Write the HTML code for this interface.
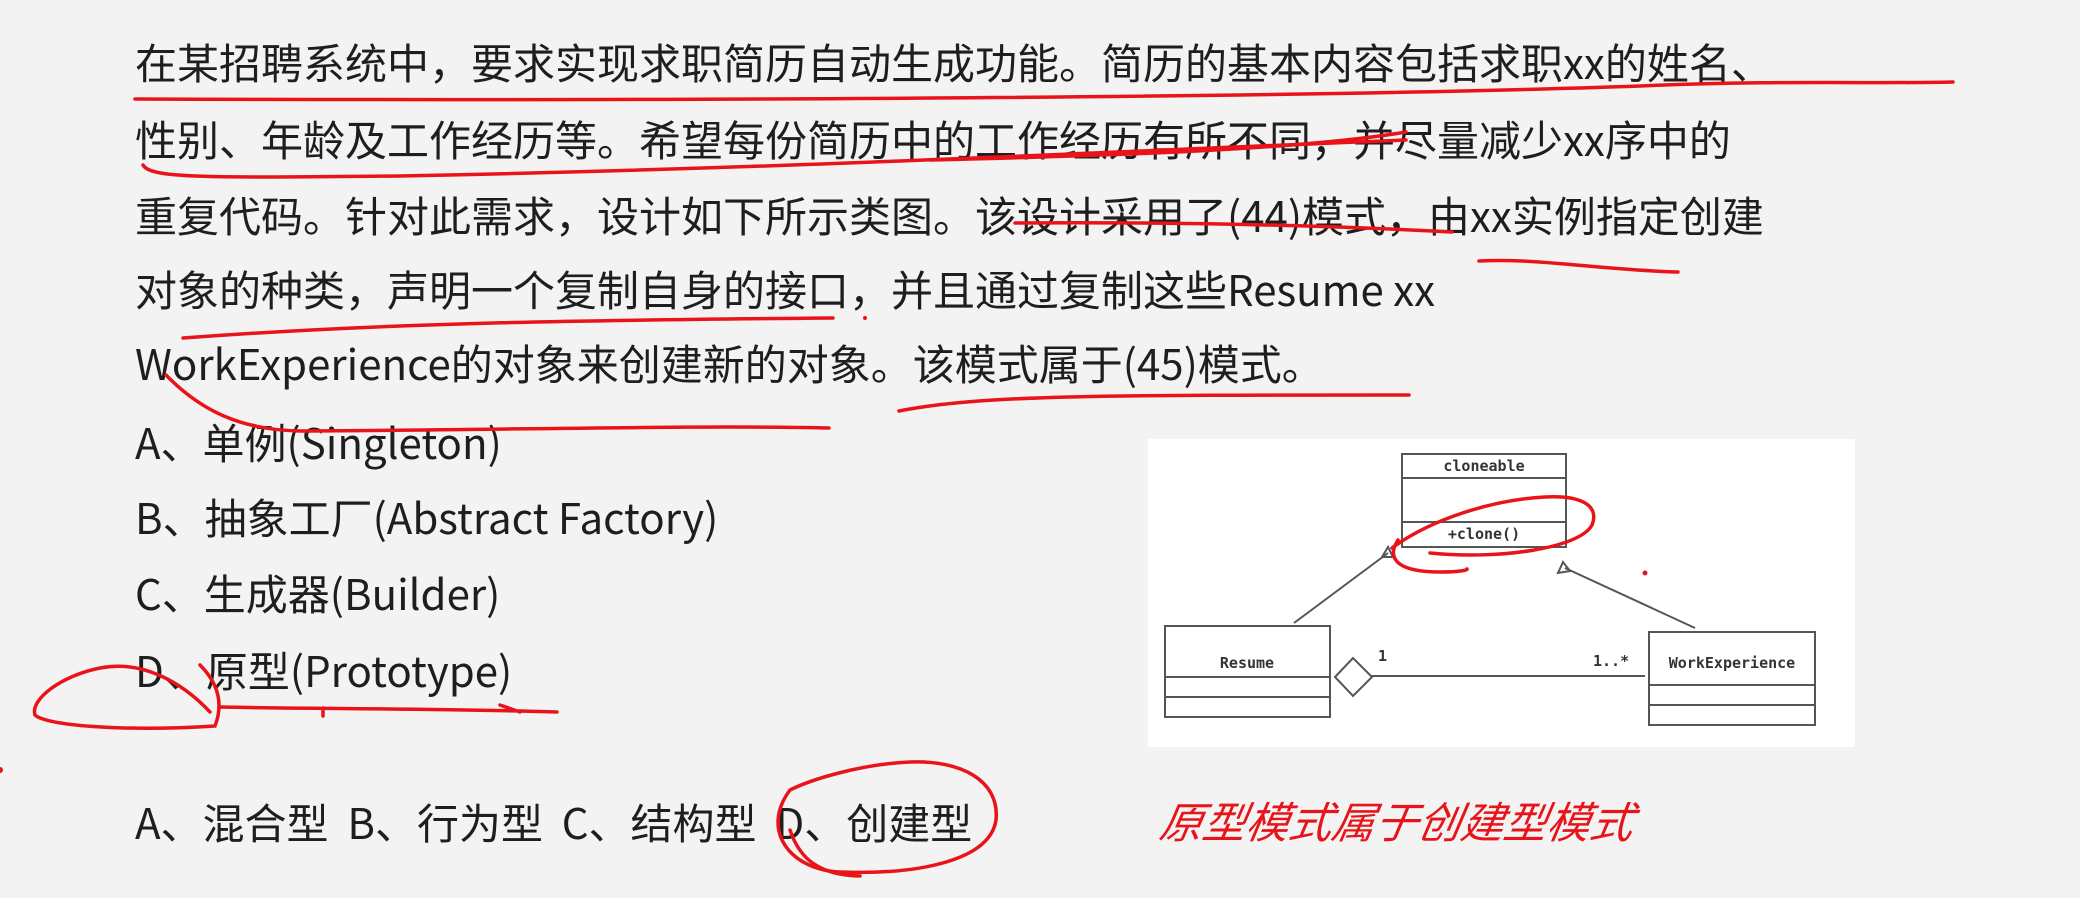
<!DOCTYPE html>
<html><head><meta charset="utf-8"><style>
html,body{margin:0;padding:0;}
body{width:2080px;height:898px;background:#f3f3f3;position:relative;overflow:hidden;font-family:"Liberation Sans","Noto Sans CJK SC",sans-serif;color:#1e1e1e;}
.t{position:absolute;left:135px;font-size:42px;line-height:50px;white-space:nowrap;font-family:"Noto Sans CJK SC",sans-serif;}
.diag{position:absolute;left:1148px;top:439px;width:707px;height:308px;background:#fff;}
.red{position:absolute;left:1161px;top:792px;font-size:43px;line-height:56px;color:#e8141a;font-style:italic;font-family:"Noto Sans CJK SC",sans-serif;white-space:nowrap;transform:skewX(-10deg);}
svg{position:absolute;left:0;top:0;}
</style></head><body>
<div class="t" style="top:37px">在某招聘系统中，要求实现求职简历自动生成功能。简历的基本内容包括求职xx的姓名、</div>
<div class="t" style="top:114px">性别、年龄及工作经历等。希望每份简历中的工作经历有所不同，并尽量减少xx序中的</div>
<div class="t" style="top:190px">重复代码。针对此需求，设计如下所示类图。该设计采用了(44)模式，由xx实例指定创建</div>
<div class="t" style="top:264px">对象的种类，声明一个复制自身的接口，并且通过复制这些Resume xx</div>
<div class="t" style="top:338px">WorkExperience的对象来创建新的对象。该模式属于(45)模式。</div>
<div class="t" style="top:417px">A、单例(Singleton)</div>
<div class="t" style="top:492px">B、抽象工厂(Abstract Factory)</div>
<div class="t" style="top:568px">C、生成器(Builder)</div>
<div class="t" style="top:645px">D、原型(Prototype)</div>
<div class="t" style="top:797px">A、混合型&nbsp;&nbsp;B、行为型&nbsp;&nbsp;C、结构型&nbsp;&nbsp;D、创建型</div>
<div class="diag"></div>
<div class="red">原型模式属于创建型模式</div>
<svg width="2080" height="898" viewBox="0 0 2080 898">
<g fill="none" stroke="#555" stroke-width="2">
<rect x="1402" y="454" width="164" height="93"/>
<line x1="1402" y1="478" x2="1566" y2="478"/>
<line x1="1402" y1="522" x2="1566" y2="522"/>
<rect x="1165" y="626" width="165" height="91"/>
<line x1="1165" y1="677" x2="1330" y2="677"/>
<line x1="1165" y1="697" x2="1330" y2="697"/>
<rect x="1649" y="632" width="166" height="93"/>
<line x1="1649" y1="685" x2="1815" y2="685"/>
<line x1="1649" y1="705" x2="1815" y2="705"/>
<polygon points="1335,677 1353,658 1372,677 1353,696"/>
<line x1="1372" y1="676" x2="1645" y2="676"/>
<line x1="1388" y1="553" x2="1294" y2="623"/>
<polygon points="1388,547 1382,557 1393,557"/>
<line x1="1565" y1="568" x2="1695" y2="628"/>
<polygon points="1563,562 1558,573 1570,571"/>
</g>
<g font-family="DejaVu Sans Mono,Liberation Mono,monospace" font-size="15" fill="#333" font-weight="bold">
<text x="1484" y="471" text-anchor="middle">cloneable</text>
<text x="1484" y="539" text-anchor="middle">+clone()</text>
<text x="1247" y="668" text-anchor="middle">Resume</text>
<text x="1732" y="668" text-anchor="middle">WorkExperience</text>
<text x="1378" y="661">1</text>
<text x="1593" y="666">1..*</text>
</g>
<g fill="none" stroke="#e8141a" stroke-width="3.5" stroke-linecap="round">
<path d="M135,99 C700,101 1300,98 1640,86 C1780,80 1880,84 1953,82"/>
<path d="M143,165 C150,178 200,178 400,176 C800,168 1100,152 1406,140"/>
<path d="M930,160 C1100,156 1300,150 1406,132"/>
<path d="M1015,223 C1150,222 1300,224 1452,232"/>
<path d="M1479,261 C1540,258 1600,270 1678,272"/>
<path d="M183,338 C400,322 600,320 833,318"/>
<path d="M166,375 C200,410 240,430 300,431 C500,430 700,425 829,428"/>
<path d="M899,411 C980,395 1100,395 1409,395"/>
<path d="M210,712 C180,680 140,660 100,668 C60,676 30,700 35,715 C45,725 120,732 215,726 C225,700 215,680 200,665"/>
<path d="M219,707 C320,709 420,708 557,712 M500,705 L520,712 M323,708 L323,716"/>
<path d="M790,790 C760,830 790,870 840,872 C920,875 990,860 996,820 C1000,780 960,760 910,762 C860,764 810,780 790,790"/>
<path d="M790,830 C800,860 820,875 860,876"/>
<path d="M1398,540 C1385,560 1400,572 1440,572 C1460,572 1468,570 1467,569 M1430,553 C1500,560 1580,548 1592,525 C1600,505 1580,495 1545,497 C1490,500 1430,520 1392,548"/>
</g>
<g fill="#e8141a"><circle cx="1645" cy="573" r="2.5"/><circle cx="865" cy="318" r="2"/><circle cx="0" cy="770" r="3"/></g>
</svg>
</body></html>
